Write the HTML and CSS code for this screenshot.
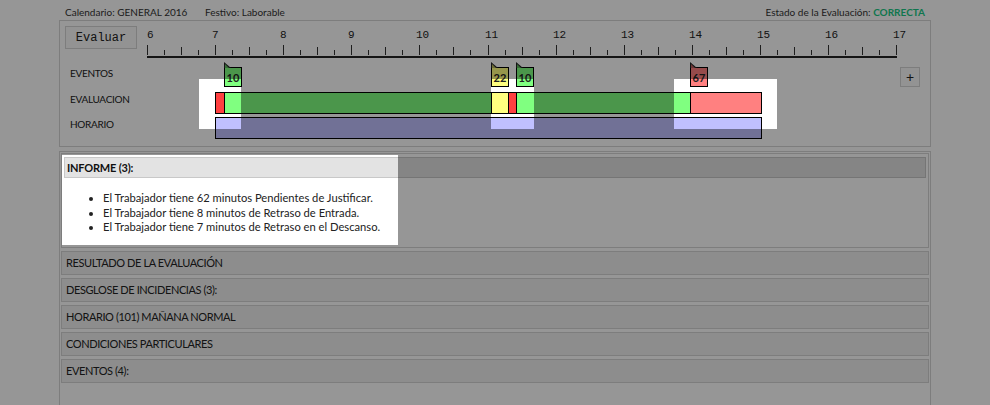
FILE: index.html
```html
<!DOCTYPE html>
<html lang="es">
<head>
    <meta charset="UTF-8">
    <meta name="viewport" content="width=device-width, initial-scale=1.0">
    <title>Evaluación de la Jornada</title>
    <link rel="stylesheet" href="styles.css">
</head>
<body>
    <div class="pagina">
        <div class="cabecera">
            <span class="cab-cal">Calendario: GENERAL 2016</span>
            <span class="cab-fest">Festivo: Laborable</span>
            <span class="cab-estado">Estado de la Evaluación: <b class="correcta">CORRECTA</b></span>
        </div>

        <div class="panel">
            <div class="fila fila-regla">
                <button class="btn-evaluar">Evaluar</button>
                <div class="regla" id="regla"></div>
            </div>
            <div class="fila fila-eventos">
                <div class="etiqueta">EVENTOS</div>
                <div class="pista">
                    <div class="evento verde" style="left:77px">10</div>
                    <div class="evento amarillo" style="left:344px">22</div>
                    <div class="evento verde" style="left:369px">10</div>
                    <div class="evento rojo" style="left:543px">67</div>
                </div>
                <button class="btn-mas">+</button>
            </div>
            <div class="fila fila-barra">
                <div class="etiqueta">EVALUACION</div>
                <div class="pista">
                    <div class="barra">
                        <div class="tramo t-rojo" style="width:9px"></div>
                        <div class="tramo t-verde" style="width:267px"></div>
                        <div class="tramo t-amarillo" style="width:17px"></div>
                        <div class="tramo t-rojo" style="width:8px"></div>
                        <div class="tramo t-verde" style="width:174px"></div>
                        <div class="tramo t-salmon ultimo"></div>
                    </div>
                </div>
            </div>
            <div class="fila fila-barra">
                <div class="etiqueta">HORARIO</div>
                <div class="pista">
                    <div class="barra horario"></div>
                </div>
            </div>
        </div>

        <div class="acordeon">
            <div class="seccion abierta">
                <div class="sec-titulo">INFORME (3):</div>
                <ul class="informe">
                    <li>El Trabajador tiene 62 minutos Pendientes de Justificar.</li>
                    <li>El Trabajador tiene 8 minutos de Retraso de Entrada.</li>
                    <li>El Trabajador tiene 7 minutos de Retraso en el Descanso.</li>
                </ul>
            </div>
            <div class="seccion">RESULTADO DE LA EVALUACIÓN</div>
            <div class="seccion">DESGLOSE DE INCIDENCIAS (3):</div>
            <div class="seccion">HORARIO (101) MAÑANA NORMAL</div>
            <div class="seccion">CONDICIONES PARTICULARES</div>
            <div class="seccion">EVENTOS (4):</div>
        </div>
    </div>

    <!-- capa de ayuda: oscurece todo salvo las zonas resaltadas -->
    <svg class="velo" width="990" height="405" viewBox="0 0 990 405">
        <path fill="rgba(0,0,0,0.41)" fill-rule="evenodd"
              d="M0 0H990V405H0Z M199 79H241V129H199Z M491 79H534V129H491Z M674 79H777V129H674Z M62 155H398V245H62Z"/>
    </svg>

    <script>
        // regla de 6 a 17 h, una marca cada cuarto de hora
        const regla = document.getElementById('regla');
        const pasoHora = 68.1;
        let html = '';
        for (let q = 0; q <= 44; q++) {
            const x = Math.round(q * pasoHora / 4);
            const tipo = q % 4 === 0 ? 'hora' : (q % 2 === 0 ? 'media' : 'cuarto');
            html += `<div class="marca ${tipo}" style="left:${x}px"></div>`;
            if (q % 4 === 0) {
                html += `<span class="hora-num" style="left:${Math.max(0, x - 3)}px">${6 + q / 4}</span>`;
            }
        }
        regla.innerHTML = html;
    </script>
</body>
</html>
```

FILE: styles.css
```css
body {
    margin: 0;
    padding: 0;
    background-color: #fff;
    color: #333;
    font-family: Lato, "Noto Sans", sans-serif;
    font-size: 11px;
}

.pagina {
    width: 872px;
    margin-left: 59px;
}

/* cabecera */
.cabecera {
    display: flex;
    height: 20px;
    box-sizing: border-box;
    padding: 6px 6px 0 6px;
    font-size: 10px;
    line-height: 13px;
    white-space: nowrap;
}

.cab-cal {
    width: 140px;
}

.cab-estado {
    margin-left: auto;
}

.correcta {
    color: #1ac985;
}

/* panel de la linea de tiempo */
.panel {
    border: 1px solid #d4d4d4;
    padding: 5px 0 7px 5px;
}

.fila {
    display: flex;
    align-items: flex-start;
}

.btn-evaluar {
    width: 72px;
    height: 23px;
    margin: 0 10px 0 0;
    padding: 0;
    border: 1px solid #d4d4d4;
    background-color: #fafafa;
    color: #222;
    font-family: "Liberation Mono", monospace;
    font-size: 12px;
}

.regla {
    position: relative;
    width: 750px;
    height: 30px;
    border-bottom: 2px solid #222;
}

.marca {
    position: absolute;
    bottom: 1px;
    width: 1px;
    background-color: #333;
}

.marca.hora {
    height: 10px;
}

.marca.media {
    height: 8px;
}

.marca.cuarto {
    height: 5px;
}

.hora-num {
    position: absolute;
    top: 3px;
    font-family: "Liberation Mono", monospace;
    font-size: 11px;
    line-height: 12px;
    color: #222;
}

.etiqueta {
    width: 77px;
    padding-left: 5px;
    font-size: 10px;
    letter-spacing: -0.3px;
    line-height: 14px;
    color: #222;
}

.pista {
    position: relative;
    width: 750px;
    height: 100%;
}

.fila-eventos {
    height: 24px;
    margin-top: 4px;
}

.fila-eventos .etiqueta {
    padding-top: 4px;
}

.evento {
    position: absolute;
    top: 5px;
    width: 18px;
    height: 20px;
    box-sizing: border-box;
    border: 1px solid #000;
    font-size: 11px;
    font-weight: bold;
    line-height: 19px;
    text-align: center;
    color: #222;
}

.evento::before {
    content: '';
    position: absolute;
    left: -1px;
    top: -6px;
    width: 7px;
    height: 6px;
    background-color: #222;
    clip-path: polygon(0 0, 100% 100%, 0 100%);
}

.evento::after {
    content: '';
    position: absolute;
    left: 0;
    top: -4px;
    width: 4px;
    height: 4px;
    clip-path: polygon(0 0, 100% 100%, 0 100%);
}

.evento.verde {
    background-color: #80ff80;
}

.evento.verde::after {
    background-color: #5cb85c;
}

.evento.amarillo {
    background-color: #ffff80;
}

.evento.amarillo::after {
    background-color: #b8b85c;
}

.evento.rojo {
    background-color: #ff8080;
}

.evento.rojo::after {
    background-color: #b85c5c;
}

.btn-mas {
    width: 20px;
    height: 20px;
    margin: 5px 0 0 3px;
    padding: 0;
    border: 1px solid #d4d4d4;
    background-color: #fafafa;
    color: #222;
    font-family: Lato, sans-serif;
    font-size: 14px;
    line-height: 16px;
}

.fila-barra {
    height: 22px;
    margin-top: 3px;
}

.fila-eventos + .fila-barra {
    margin-top: 6px;
}

.barra {
    display: flex;
    width: 547px;
    height: 22px;
    margin-left: 68px;
    box-sizing: border-box;
    border: 1px solid #000;
}

.barra.horario {
    background-color: #c0c0ff;
}

.tramo {
    height: 100%;
    box-sizing: border-box;
    border-right: 1px solid #000;
}

.tramo.ultimo {
    flex: 1;
    border-right: none;
}

.t-rojo {
    background-color: #ff4040;
}

.t-verde {
    background-color: #80ff80;
}

.t-amarillo {
    background-color: #ffff80;
}

.t-salmon {
    background-color: #ff8080;
}

/* acordeon de resultados */
.acordeon {
    margin-top: 4px;
    min-height: 252px;
    border: 1px solid #d4d4d4;
    padding: 1px;
}

.seccion {
    height: 24px;
    margin-top: 3px;
    box-sizing: border-box;
    border: 1px solid #d4d4d4;
    background-color: #f0f0f0;
    padding-left: 4px;
    letter-spacing: -0.4px;
    line-height: 22px;
    color: #222;
}

.seccion.abierta {
    height: auto;
    margin-top: 0;
    padding: 3px 2px 0 2px;
    background-color: #fff;
    letter-spacing: normal;
}

.sec-titulo {
    height: 21px;
    box-sizing: border-box;
    border: 1px solid #c8c8c8;
    background-color: #e3e3e3;
    padding-left: 2px;
    font-weight: bold;
    letter-spacing: -0.2px;
    line-height: 19px;
    color: #111;
}

.informe {
    margin: 13px 0 12px 0;
    padding-left: 39px;
    font-size: 11.2px;
    line-height: 14.5px;
    color: #222;
}

/* velo del tutorial */
.velo {
    position: fixed;
    top: 0;
    left: 0;
    pointer-events: none;
}
```
